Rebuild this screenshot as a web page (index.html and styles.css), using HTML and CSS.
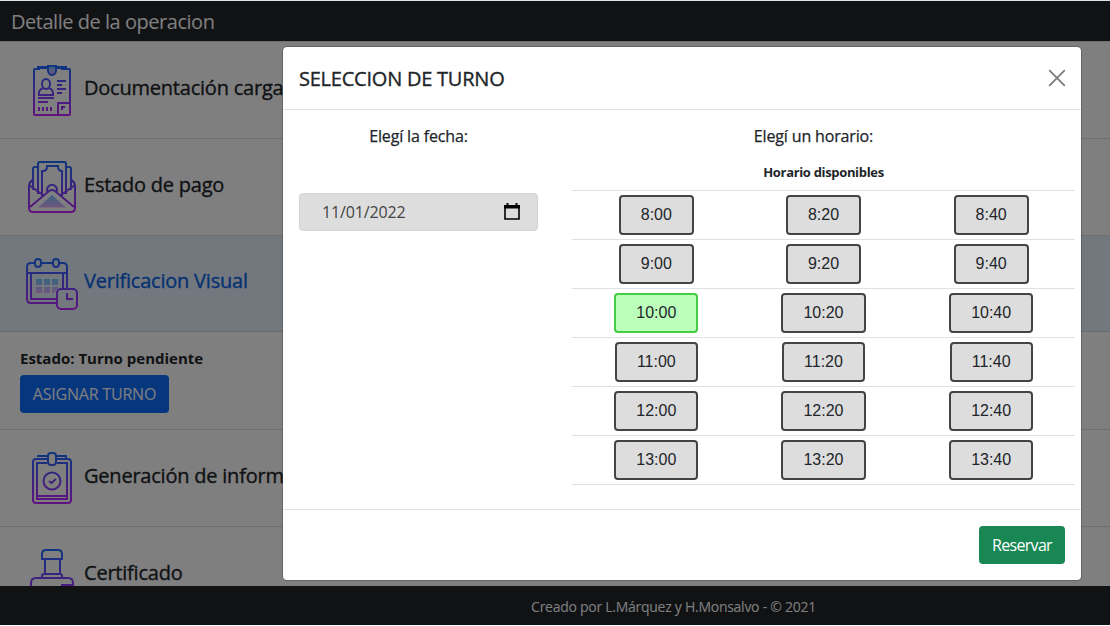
FILE: index.html
```html
<!DOCTYPE html>
<html lang="es">
<head>
<meta charset="utf-8">
<title>Detalle de la operacion</title>
<link rel="stylesheet" href="styles.css">
</head>
<body>
<svg width="0" height="0" class="defs"><defs>
<linearGradient id="g" gradientUnits="userSpaceOnUse" x1="0" y1="0" x2="0" y2="54"><stop offset="0" stop-color="#1a6dff"/><stop offset="1" stop-color="#c822ff"/></linearGradient>
<linearGradient id="h" x1="0" y1="0" x2="0" y2="1"><stop offset="0" stop-color="#6dc7ff"/><stop offset="1" stop-color="#e6abff"/></linearGradient>
</defs></svg>
<div class="page">
<header class="navbar"><span class="brand">Detalle de la operacion</span></header>
<main class="accordion">
  <section class="item first"><div class="head">
    <svg class="icon" viewBox="0 0 64 64" fill="none" stroke="url(#g)" stroke-width="2"><path d="M20 5H15q-1 0-1 1V50q0 1 1 1H49q1 0 1-1V6q0-1-1-1H41"/><path d="M17 3.500H28M36 3.500H47" stroke-width="3"/><path d="M28 2H36V7q-1 4-4 4T28 7Z" fill="url(#h)"/><ellipse cx="26" cy="20" rx="4" ry="5"/><path d="M23 24Q20 25 19 28V31H33V28Q32 25 29 24M37 17H46M37 21H42M37 25H46M37 29H42M18 34H34M18 38H28M19 43V47M23 43V47M27 43V47M31 43V47M38 51V39H50M42 46V43H45"/></svg>
    <span class="label">Documentación cargada</span></div></section>
  <section class="item"><div class="head">
    <svg class="icon" viewBox="0 0 64 64" fill="none" stroke="url(#g)" stroke-width="2"><path d="M18 33V3q0-2 2-2H44q2 0 2 2V33M18 6H15q-2 0-2 2V29M46 6H49q2 0 2 2V29M22 35V10H23Q27 10 27 5H38Q38 10 42 10V35M27.500 31A5 5 0 1 1 36.500 31M13 19Q9 21 9 25V47q0 4 4 4H51q4 0 4-4V25Q55 21 51 19M9 24 23 34M55 24 41 34M10 46 29 30Q32 28 35 30L54 46"/><path d="M32 34 46 46.500H18Z" fill="url(#h)" stroke="none"/></svg>
    <span class="label">Estado de pago</span></div></section>
  <section class="item"><div class="head active">
    <svg class="icon" viewBox="0 0 64 64" fill="none" stroke="url(#g)" stroke-width="2"><path d="M14 5H11q-4 0-4 4V41q0 4 4 4H36M22 5H32M40 5H43q4 0 4 4V30M7 15H47M11 15V41H36M43 15V30"/><rect x="15" y="1" width="6" height="8" rx="3"/><rect x="33" y="1" width="6" height="8" rx="3"/><path d="M16 21h6v6h-6zM24 21h6v6h-6zM32 21h6v6h-6zM16 29h6v6h-6zM24 29h6v6h-6zM32 29h6v2q-3 1-3 4h-3z" fill="url(#h)" stroke="none"/><rect x="37" y="31" width="20" height="20" rx="4"/><path d="M47 35V41H53"/></svg>
    <span class="label">Verificacion Visual</span></div>
    <div class="detail"><strong>Estado: Turno pendiente</strong><button class="btn primary">ASIGNAR TURNO</button></div></section>
  <section class="item"><div class="head">
    <svg class="icon" viewBox="0 0 64 64" fill="none" stroke="url(#g)" stroke-width="2"><path d="M27 7H16q-3 0-3 3V48q0 3 3 3H48q3 0 3-3V10q0-3-3-3H37M27 11H17V47H47V11H37M18 5V4H27M37 4H46V6M17 44H47M29 29 31.500 31 36 27"/><rect x="28" y="1" width="8" height="12" rx="3"/><circle cx="32" cy="29" r="8.500"/></svg>
    <span class="label">Generación de informe</span></div></section>
  <section class="item"><div class="head">
    <svg class="icon" viewBox="0 0 64 64" fill="none" stroke="url(#g)" stroke-width="2"><path d="M22 10V5q0-4 4-4H38q4 0 4 4V10ZM25 10V25M40 10V25M22 28V27q0-2 2-2H40q2 0 2 2V28M11 40V34q0-5 5-5H48q5 0 5 5V40ZM41 36H53"/></svg>
    <span class="label">Certificado</span></div></section>
</main>
<footer class="footer"><span>Creado por L.Márquez y H.Monsalvo - © 2021</span></footer>
</div>
<div class="backdrop">
<div class="modal">
  <div class="modal-header"><h5>SELECCION DE TURNO</h5>
  <svg class="close" viewBox="0 0 16 16" stroke="#000" stroke-width="1.900" stroke-linecap="round"><path d="M.7.7 15.300 15.300M15.300.7.7 15.300"/></svg></div>
  <div class="modal-body">
    <div class="date-col"><p>Elegí la fecha:</p>
      <div class="date"><span>11/01/2022</span><svg width="16" height="17" viewBox="0 0 16 17"><path d="M1 3H15V16H1Z" fill="none" stroke="#000" stroke-width="1.600"/><path d="M0 2H16V5.500H0ZM2.500 0H4.500V2H2.500ZM11.500 0H13.500V2H11.500Z"/></svg></div></div>
    <div class="time-col"><p>Elegí un horario:</p>
      <table><thead><tr><th colspan="3">Horario disponibles</th></tr></thead><tbody>
      <tr><td><button class="slot">8:00</button></td><td><button class="slot">8:20</button></td><td><button class="slot">8:40</button></td></tr>
      <tr><td><button class="slot">9:00</button></td><td><button class="slot">9:20</button></td><td><button class="slot">9:40</button></td></tr>
      <tr><td><button class="slot selected">10:00</button></td><td><button class="slot">10:20</button></td><td><button class="slot">10:40</button></td></tr>
      <tr><td><button class="slot">11:00</button></td><td><button class="slot">11:20</button></td><td><button class="slot">11:40</button></td></tr>
      <tr><td><button class="slot">12:00</button></td><td><button class="slot">12:20</button></td><td><button class="slot">12:40</button></td></tr>
      <tr><td><button class="slot">13:00</button></td><td><button class="slot">13:20</button></td><td><button class="slot">13:40</button></td></tr>
      </tbody></table></div>
  </div>
  <div class="modal-footer"><button class="btn success">Reservar</button></div>
</div>
</div>
</body>
</html>
```
FILE: styles.css
```css
*{box-sizing:border-box}
body{margin:0;height:626px;overflow:hidden;background:#fff;color:#212529;font:16px/24px "Open Sans","Noto Sans",sans-serif;white-space:nowrap}
.defs{display:block}
button{font:inherit}
.page{height:625px;border-top:1px solid #dbe3e3;display:flex;flex-direction:column}
.navbar{flex:0 0 40px;background:#212529;display:flex;align-items:center;padding:2px 11px 0;color:#fff;font-size:20px}
.brand{letter-spacing:-.47px}
.accordion{flex:1;min-height:0;overflow:hidden}
.item{border-bottom:1px solid #dfdfdf}
.item.first{border-top:1px solid #dfdfdf}
.head{height:96px;padding:16px 20px;display:flex;align-items:center}
.first .head{height:96px}
.head.active{background:#e7f1ff;color:#0c63e4;border-bottom:1px solid #ced7e3}
.icon{width:64px;height:64px;flex:none;overflow:visible;transform:translateY(6px)}
.first .icon{transform:translateY(6px)}
.label{font-size:20px;font-weight:500;line-height:24px;padding-bottom:5px;letter-spacing:-.22px;-webkit-text-stroke:.35px currentColor}
.detail{height:97px;padding:14px 20px;display:flex;flex-direction:column;align-items:flex-start;gap:5px}
.detail strong{font-size:15px}
.btn{height:38px;border:0;border-radius:4px;color:#fff;padding:0;display:flex;align-items:center;justify-content:center}
.primary{width:149px;background:#0d6efd;letter-spacing:-.2px}
.footer{flex:0 0 39px;background:#212529;color:#fff;font-size:14px;letter-spacing:-.27px;display:flex;align-items:center;justify-content:center;padding:3px 0 0 237px}
.backdrop{position:absolute;left:0;top:1px;width:1110px;height:624px;background:rgba(0,0,0,.5);padding:45px 0 0 282px}
.modal{width:800px;height:535px;background:#fff;background-clip:padding-box;border:1px solid rgba(0,0,0,.2);border-radius:5px;display:flex;flex-direction:column}
.modal-header{height:63px;border-bottom:1px solid #dee2e6;display:flex;align-items:center;justify-content:space-between;padding:0 16px}
h5{margin:0;padding-top:2px;font-size:20px;font-weight:500;letter-spacing:-.23px;-webkit-text-stroke:.35px currentColor}
.close{width:16px;height:16px;opacity:.5;overflow:visible}
.modal-body{flex:1;display:flex;padding:14px 5px 0 16px;gap:34px}
.date-col{width:239px}
.time-col{width:503px}
p{margin:0;text-align:center;font-weight:500;letter-spacing:-.15px;-webkit-text-stroke:.25px currentColor}
.time-col p{padding-right:20px}
.date{margin-top:45px;height:38px;border:1px solid #ced4da;border-radius:4px;background:#ddd;display:flex;align-items:center;justify-content:space-between;padding:0 17px 0 22px;color:#444;letter-spacing:-.15px}
.date svg{margin-bottom:2px}
table{width:100%;border-collapse:collapse;table-layout:fixed;margin-top:9px}
th{height:33px;padding:0 0 2px;font-size:13px;line-height:24px;letter-spacing:-.33px;vertical-align:middle;border-bottom:1px solid #dee2e6}
td{height:49px;padding:0;text-align:center;vertical-align:middle;border-bottom:1px solid #dee2e6}
.slot{height:40px;padding:0 20px;border:2px solid #444;border-radius:4px;background:#ddd;color:#212529;font:16px "Liberation Sans",Arial,sans-serif;display:inline-block;vertical-align:middle}
td:first-child{padding-left:1px}
.selected{background:#bfb;border-color:#4c4}
.modal-footer{height:71px;border-top:1px solid #dee2e6;padding:16px;display:flex;justify-content:flex-end}
.success{width:86px;background:#198754;letter-spacing:-.7px}
```
